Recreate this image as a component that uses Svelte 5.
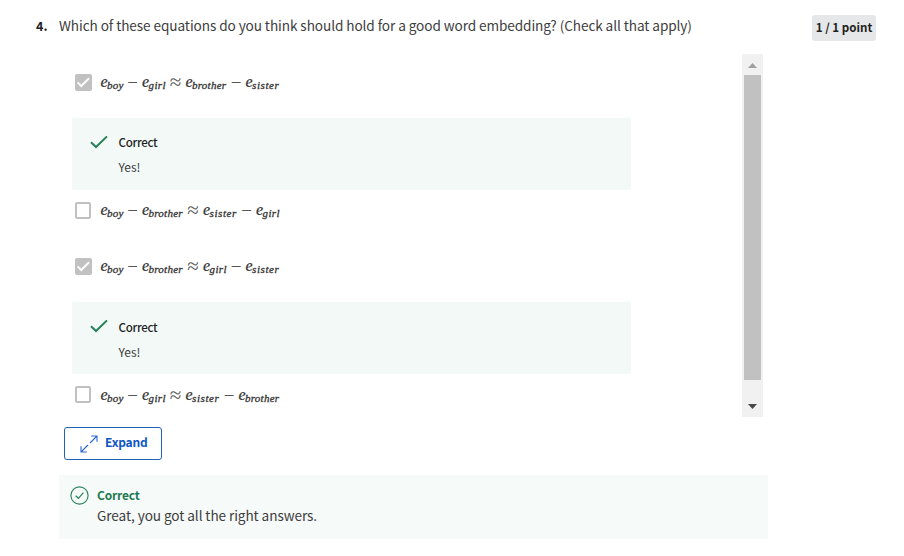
<script>
  const options = [
    { checked: true, terms: ['boy', '−', 'girl', '≈', 'brother', '−', 'sister'] },
    { checked: false, terms: ['boy', '−', 'brother', '≈', 'sister', '−', 'girl'] },
    { checked: true, terms: ['boy', '−', 'brother', '≈', 'girl', '−', 'sister'] },
    { checked: false, terms: ['boy', '−', 'girl', '≈', 'sister', '−', 'brother'] }
  ];
</script>

<main>
  <header>
    <span class="number">4.</span>
    <h1>Which of these equations do you think should hold for a good word embedding? (Check all that apply)</h1>
    <span class="points">1 / 1 point</span>
  </header>

  <section class="viewport">
    <div class="options">
      {#each options as option, i}
        <div class="option" class:spaced={option.checked}>
          <span class="box" class:checked={option.checked}>
            {#if option.checked}
              <svg width="17" height="17" viewBox="0 0 17 17"><path d="M2.7 8.5 6.3 12 14 4.3" fill="none" stroke="#fff" stroke-width="2" /></svg>
            {/if}
          </span>
          <span class="math">
            {#each option.terms as term}
              {#if term.length > 1}
                <span class="term {term}"><i>e</i><span class="sub">{term}</span></span>
              {:else}
                <span class="op" class:approx={term === '≈'}>{term}</span>
              {/if}
            {/each}
          </span>
        </div>
        {#if option.checked}
          <div class="feedback" class:later={i > 0}>
            <svg width="18" height="14" viewBox="0 0 18 14"><path d="M1 7.2 6 12 17 1.4" fill="none" stroke="#28815a" stroke-width="2" /></svg>
            <div class="copy">
              <div class="title">Correct</div>
              <div class="body">Yes!</div>
            </div>
          </div>
        {/if}
      {/each}
    </div>
    <div class="scrollbar">
      <svg width="9" height="5" viewBox="0 0 9 5"><path d="M0 5 4.5 0 9 5z" fill="#a0a0a0" /></svg>
      <div class="thumb"></div>
      <svg class="down" width="9" height="5" viewBox="0 0 9 5"><path d="M0 0 4.5 5 9 0z" fill="#484848" /></svg>
    </div>
  </section>

  <button>
    <svg width="18" height="18" viewBox="0 0 18 18" fill="none" stroke="#2a66cc" stroke-width="1.1">
      <path d="M10 8 17 1M11.2 1H17v5.8M8 10 1 17M1 11.2V17h5.8" />
    </svg>
    <span>Expand</span>
  </button>

  <footer>
    <svg width="19" height="19" viewBox="0 0 19 19" fill="none" stroke="#28815a">
      <circle cx="9.5" cy="9.5" r="8.6" stroke-width="1.1" />
      <path d="M5.7 9.7 8.4 12.3 13.4 6.7" stroke-width="1.2" />
    </svg>
    <div>
      <div class="result">Correct</div>
      <div class="message">Great, you got all the right answers.</div>
    </div>
  </footer>
</main>

<style>
  :global(body) { margin: 0; background: #fff; }
  main {
    box-sizing: border-box;
    width: 904px;
    height: 556px;
    overflow: hidden;
    display: flex;
    flex-direction: column;
    align-items: flex-start;
    font-family: "Noto Sans CJK SC", "Open Sans", sans-serif;
    color: #3d3d3d;
  }
  svg { display: block; flex: none; }
  header { display: flex; width: 100%; height: 54px; white-space: nowrap; }
  .number { width: 23px; margin-left: 36px; font-size: 12.5px; font-weight: 700; line-height: 20px; padding-top: 16px; color: #1f1f1f; }
  h1 { width: 753px; margin: 0; padding-top: 15px; font-size: 13.6px; letter-spacing: -0.08px; line-height: 20px; font-weight: 400; }
  .points {
    width: 64px; height: 26px; margin-top: 15px; border-radius: 3px; background: #e5e7e8;
    color: #1f1f1f; font-size: 11.6px; font-weight: 700; line-height: 24px; text-align: center;
  }
  .viewport { display: flex; height: 363px; }
  .options { width: 670px; padding-left: 72px; }
  .option { display: flex; align-items: flex-start; height: 49px; padding: 12px 0 0 3px; box-sizing: border-box; }
  .option.spaced { height: 64px; padding-top: 20px; }
  .option:not(:first-child).spaced { height: 63px; padding-top: 19px; }
  .box { box-sizing: border-box; width: 16px; height: 17px; border: 2px solid #c1c1c1; border-radius: 2px; flex: none; }
  .box.checked { border: 0; background: #c1c1c1; width: 17px; }
  .math { display: flex; margin-left: 9.5px; font-family: "Liberation Serif", serif; line-height: 18px; color: #333; }
  .checked + .math { margin-left: 8.5px; }
  .option:last-child .math { padding-top: 1px; }
  .term { display: flex; }
  .term i { width: 6.5px; font-size: 16px; line-height: 16px; -webkit-text-stroke: 0.2px #333; }
  .sub { font-size: 11px; font-style: italic; line-height: 22px; letter-spacing: 0.25px; -webkit-text-stroke: 0.3px #333; }
  .boy { width: 22.5px; }
  .girl { width: 23.5px; }
  .girl .sub { letter-spacing: 0.4px; }
  .brother { width: 41px; }
  .sister { width: 34px; }
  .sister .sub { letter-spacing: 0.6px; }
  .op { width: 19px; font-size: 19px; line-height: 17px; text-align: center; color: #555; }
  .approx { width: 20px; font-size: 21px; line-height: 16px; }
  .feedback { display: flex; box-sizing: border-box; width: 559px; height: 72px; padding: 16px 0 0 18px; background: #f3f9f7; }
  .feedback svg { margin: 1px 10.5px 0 0; }
  .later .copy { padding-top: 1px; }
  .title { font-size: 11.6px; letter-spacing: -0.3px; font-weight: 500; line-height: 17px; color: #1f1f1f; }
  .body { margin-top: 7px; font-size: 12px; line-height: 18px; }
  .scrollbar { display: flex; flex-direction: column; align-items: center; width: 21px; height: 363px; background: #f1f1f1; }
  .scrollbar svg { margin-top: 9px; }
  .thumb { width: 17px; height: 305px; margin-top: 7px; background: #c1c1c1; }
  .scrollbar .down { margin-top: 24px; }
  button {
    display: flex; align-items: center; box-sizing: border-box; width: 98px; height: 33px; margin: 10px 0 0 64px; padding: 0 0 0 14.5px;
    border: 1px solid #1f62b5; border-radius: 3px; background: #fff; color: #0f56c5;
    font-family: inherit; font-size: 12px; letter-spacing: -0.2px; font-weight: 700; line-height: 20px;
  }
  button span { margin: -3px 0 0 7.5px; }
  footer { display: flex; box-sizing: border-box; width: 709px; height: 64px; margin: 15px 0 0 59px; padding: 11px 0 0 11px; background: #f6faf9; }
  footer svg { margin-right: 8px; }
  .result { font-size: 12px; letter-spacing: -0.2px; font-weight: 700; line-height: 18px; color: #1f7a50; }
  .message { margin-top: 1px; font-size: 13.6px; letter-spacing: -0.08px; line-height: 21px; }
</style>
